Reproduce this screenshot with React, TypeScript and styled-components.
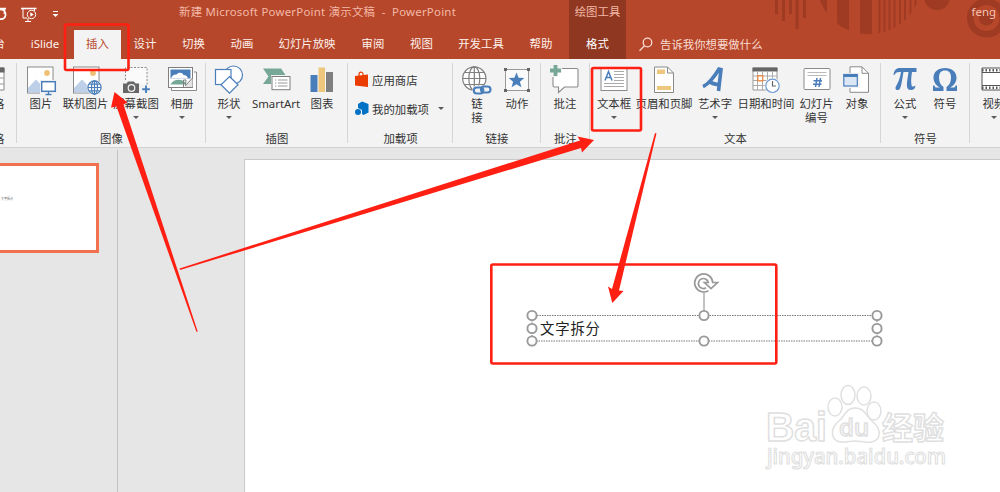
import React from 'react';
import styled, { createGlobalStyle } from 'styled-components';

const Global = createGlobalStyle`
  * { box-sizing: border-box; }
  body {
    margin: 0;
    overflow: hidden;
    font-family: "Noto Sans", "Noto Sans CJK SC", sans-serif;
    font-size: 11.4px;
    color: #333;
  }
`;

const Window = styled.div`
  position: relative;
  width: 1000px;
  height: 492px;
  overflow: hidden;
  display: flex;
  flex-direction: column;
  background: #e6e6e6;
`;

const Header = styled.header`
  position: relative;
  height: 59px;
  flex: none;
  background: #b7472a;
  color: #fbeae5;
`;

const Decor = styled.svg`
  position: absolute;
  right: 0;
  top: 0;
`;

const HeaderRows = styled.div`
  position: relative;
  height: 59px;
  display: flex;
  align-items: stretch;
`;

const HeaderMain = styled.div`
  width: 569px;
  flex: none;
  display: flex;
  flex-direction: column;
`;

const HeaderEnd = styled.div`
  flex: 1;
  display: flex;
  flex-direction: column;
`;

const TitleRow = styled.div`
  height: 30px;
  flex: none;
  display: flex;
  align-items: flex-start;
  color: #f3b9a8;
`;

const QuickAccess = styled.svg`
  flex: none;
`;

const Title = styled.span`
  margin-left: 109px;
  line-height: 16px;
  padding-top: 4px;
  white-space: pre;
  letter-spacing: 0.25px;
`;

const User = styled.span`
  margin: 4px 4px 0 auto;
  line-height: 16px;
  color: #f5c3b4;
`;

const TabRow = styled.nav`
  height: 29px;
  flex: none;
  display: flex;
`;

const Tab = styled.div<{ $w: number; $active?: boolean }>`
  width: ${p => p.$w}px;
  flex: none;
  display: flex;
  justify-content: center;
  line-height: 28px;
  white-space: nowrap;
  background: ${p => (p.$active ? '#f3f3f3' : 'transparent')};
  color: ${p => (p.$active ? '#b7472a' : '#fdf1ed')};
`;

const ContextTab = styled.div`
  width: 57px;
  flex: none;
  background: #8f3720;
  display: flex;
  flex-direction: column;
  align-items: center;
`;

const ContextTitle = styled.span`
  height: 30px;
  padding-top: 4px;
  line-height: 16px;
  color: #f3b9a8;
`;

const ContextName = styled.span`
  line-height: 28px;
  color: #fff;
`;

const TellMe = styled.div`
  height: 28px;
  display: flex;
  align-items: center;
  padding-left: 12px;
  gap: 7px;
  color: #f9dcd3;
`;

const Ribbon = styled.section`
  height: 89px;
  flex: none;
  display: flex;
  background: #f3f3f3;
  border-bottom: 1px solid #d2d2d2;
  overflow: hidden;
`;

const Group = styled.div<{ $w: number }>`
  position: relative;
  width: ${p => p.$w}px;
  flex: none;
  display: flex;
  flex-direction: column;
  &::after {
    content: '';
    position: absolute;
    right: 0;
    top: 4px;
    width: 1px;
    height: 80px;
    background: #d6d6d6;
  }
`;

const GroupBody = styled.div`
  height: 71px;
  flex: none;
  display: flex;
  padding-top: 6px;
`;

const GroupLabel = styled.div<{ $shift?: number }>`
  text-align: center;
  line-height: 17px;
  white-space: nowrap;
  margin-left: ${p => p.$shift ?? 0}px;
`;

const ToolButton = styled.div<{ $w: number; $gap?: number }>`
  width: ${p => p.$w}px;
  margin-left: ${p => p.$gap ?? 0}px;
  flex: none;
  display: flex;
  flex-direction: column;
  align-items: center;
`;

const ToolIcon = styled.svg`
  width: 30px;
  height: 30px;
  flex: none;
  overflow: visible;
`;

const ToolLabel = styled.span`
  margin-top: 2px;
  line-height: 14px;
  white-space: pre;
  text-align: center;
`;

const Caret = styled.i`
  margin-top: 5px;
  border: 3px solid transparent;
  border-top-color: #5a5a5a;
  border-bottom: 0;
`;

const AddinList = styled.div`
  display: flex;
  flex-direction: column;
  padding: 0 0 0 7px;
`;

const AddinRow = styled.div`
  height: 29px;
  display: flex;
  align-items: center;
  gap: 3px;
  white-space: nowrap;
`;

const AddinCaret = styled(Caret)`
  margin: 0 0 0 6px;
`;

const Workspace = styled.main`
  flex: 1;
  display: flex;
`;

const ThumbPane = styled.aside`
  width: 118px;
  flex: none;
  margin-top: 2px;
  padding-top: 13px;
  border-right: 1px solid #c3c3c3;
`;

const Thumb = styled.div`
  width: 99px;
  height: 90px;
  background: #fff;
  border: 3px solid #f2714f;
  border-left: 0;
  padding: 31px 0 0 1px;
  font-size: 3px;
  line-height: 5px;
  color: #555;
`;

const Canvas = styled.div`
  flex: 1;
  display: flex;
  padding: 11px 0 0 126px;
`;

const Slide = styled.div`
  position: relative;
  flex: 1;
  background: #fff;
  border: 1px solid #c9c9c9;
  border-width: 1px 0 0 1px;
`;

const TextBox = styled.div`
  position: absolute;
  left: 287px;
  top: 155px;
  width: 346px;
  height: 27px;
  padding-left: 8px;
  font-size: 14.4px;
  letter-spacing: 0.8px;
  line-height: 27px;
  color: #222;
`;

const Handles = styled.svg`
  position: absolute;
  left: -10px;
  top: -50px;
`;

const Watermark = styled.svg`
  position: absolute;
  left: 516px;
  top: 220px;
`;

const Annotations = styled.svg`
  position: absolute;
  left: 0;
  top: 0;
  pointer-events: none;
`;

const BLUE = '#4a7ebb';
const GREY = '#7f7f7f';

const Photo = () => (
  <>
    <rect x="1.500" y="2" width="25.500" height="26" fill="#fff" stroke="#8a8a8a" />
    <path d="M2 27.500V23l8-8.500 8 8.500v4.500z" fill="#bdd0e7" />
    <circle cx="21" cy="8" r="2.900" fill="#eec176" />
  </>
);

const icons: Record<string, React.ReactNode> = {
  picture: (
    <>
      <Photo />
      <path d="M14 15h17v15H14z" fill="#f3f3f3" />
      <rect x="15.700" y="16.700" width="13.600" height="9.600" fill="#fff" stroke={BLUE} strokeWidth="1.500" />
      <path d="M22.500 27v2M19.500 29.500h6" stroke={BLUE} strokeWidth="1.300" />
    </>
  ),
  online: (
    <g transform="translate(1 0)">
      <Photo />
      <circle cx="22.500" cy="22.500" r="7.800" fill="#f3f3f3" />
      <g fill="none" stroke={BLUE} strokeWidth="1.200">
        <circle cx="22.500" cy="22.500" r="6.600" fill="#fff" />
        <ellipse cx="22.500" cy="22.500" rx="3" ry="6.600" />
        <path d="M22.500 16v13M16 22.500h13M17.200 19.200h10.600M17.200 25.800h10.600" />
      </g>
    </g>
  ),
  screenshot: (
    <>
      <path d="M4.500 15V2.500h21.500V20" fill="#fafafa" stroke="#8a8a8a" strokeDasharray="2 1.500" />
      <path d="M2 18.500h3.500l1.500-2h6l1.500 2H18V28H2z" fill="#666" />
      <circle cx="10.500" cy="23" r="3.300" fill="none" stroke="#f3f3f3" strokeWidth="1.200" />
      <path d="M25 20.500v7.500M21.200 24.200h7.600" stroke={BLUE} strokeWidth="1.900" />
    </>
  ),
  album: (
    <>
      <path d="M4.500 23v2.500h25V7H27" fill="#fff" stroke="#8a8a8a" />
      <rect x="1.500" y="2.500" width="24" height="20" fill="#fff" stroke={GREY} />
      <path d="M3.500 4.500h20v9h-20z" fill={BLUE} />
      <path d="M4 13.500c1-3 3-4.500 5.500-4 2-2.500 6-2 7 .5 2.500 0 4 1.500 4.500 3.500z" fill="#fff" />
      <path d="M3.500 19.500c2-4 7-6 12-4l3 2v2z" fill="#76a797" />
      <path d="M17 22l8.500-9v9z" fill="#e3e3e3" />
      <path d="M16.500 22.500V15H19l-.5 5.500L25.500 13" fill="none" stroke={GREY} />
    </>
  ),
  shapes: (
    <g fill="#fff" stroke={BLUE} strokeWidth="1.200">
      <circle cx="19.500" cy="10" r="9" />
      <rect x="1.500" y="4.500" width="15.500" height="15" />
      <path d="M15.500 11.500l8.500 8.300-8.500 8.300L7 19.800z" />
    </g>
  ),
  smartart: (
    <>
      <path d="M2 3.500h18l4.500 6.500v9H2l5.500-7.500z" fill="#76a797" />
      <path d="M10 10h21v16H10z" fill="#f3f3f3" />
      <rect x="11" y="11.500" width="18" height="13.200" fill="#fff" stroke={GREY} />
      <path d="M14 15h1.300M14 18h1.300M14 21h1.300M17 15h9.500M17 18h9.500M17 21h9.500" stroke="#999" />
    </>
  ),
  chart: (
    <>
      <path d="M3.500 10h7v17h-7z" fill={BLUE} />
      <path d="M11.500 2.500H18V27h-6.500z" fill="#eec67c" />
      <path d="M19 7h7v20h-7z" fill={GREY} />
    </>
  ),
  link: (
    <>
      <g fill="none" stroke={GREY} strokeWidth="1.200">
        <circle cx="12.300" cy="13.500" r="11.600" fill="#fff" />
        <ellipse cx="12.300" cy="13.500" rx="5.500" ry="11.600" />
        <path d="M12.300 2v23M.7 13.500h23M2.500 7.500h19.600M2.500 19.500h19.600" />
      </g>
      <rect x="10.500" y="20.500" width="19" height="9.500" rx="4.500" fill="#f3f3f3" />
      <g fill="none" stroke={BLUE} strokeWidth="2.100">
        <rect x="11.800" y="22.500" width="9.500" height="6" rx="3" />
        <rect x="19" y="21.500" width="9.500" height="6" rx="3" />
      </g>
    </>
  ),
  action: (
    <>
      <rect x="3.500" y="4.500" width="23" height="21" fill="#fafafa" stroke="#999" />
      <path d="M2 3h3v3H2zM25 3h3v3h-3zM2 24h3v3H2zM25 24h3v3h-3z" fill="#666" />
      <path d="M14.500 7.500l2.100 5.300 5.700.3-4.400 3.600 1.500 5.600-4.900-3.100-4.900 3.100 1.500-5.600-4.400-3.600 5.700-.3z" fill={BLUE} />
    </>
  ),
  comment: (
    <>
      <path d="M4.500 3.500h22a1.500 1.500 0 0 1 1.500 1.500v15.500a1.500 1.500 0 0 1-1.500 1.500H14.500L8.500 27.500V22h-4A1.500 1.500 0 0 1 3 20.500V5a1.500 1.500 0 0 1 1.500-1.500z" fill="#fff" stroke="#8a8a8a" strokeWidth="1.100" />
      <path d="M-1 -1h13v8.500H7.500V12H-1z" fill="#f3f3f3" />
      <path d="M5.500 0v11M0 5.500h11" stroke="#76a797" strokeWidth="3.800" />
    </>
  ),
  textbox: (
    <>
      <rect x="2" y="3" width="26" height="22.500" fill="#fff" stroke="#8a8a8a" />
      <path d="M15 6.500h10M15 9.500h10M15 12.500h10M15 15.500h10M5 18.500h20M5 21.500h20" stroke="#aaa" />
      <path d="M6 15.500L9.500 6.500L13 15.500M7.300 12.500h4.400" fill="none" stroke={BLUE} strokeWidth="1.500" />
    </>
  ),
  headerfooter: (
    <>
      <path d="M5.500 2h13l6 6v19.500h-19z" fill="#fff" stroke="#8a8a8a" />
      <path d="M18.500 2v6h6" fill="none" stroke="#8a8a8a" />
      <path d="M8 4.500h8v4.500H8zM8 21h14v4H8z" fill="#eec67c" />
    </>
  ),
  wordart: (
    <path d="M3 21.500C8 19.500 15 11 19 4l2 .5-2.500 21.500M8.500 16c3 2.500 7 3.500 11.500 3.500" fill="none" stroke={BLUE} strokeWidth="3.600" />
  ),
  datetime: (
    <>
      <path d="M2 3h24v22H2z" fill="#fff" stroke="#999" />
      <path d="M1.500 2.500h25v4h-25z" fill="#666" />
      <path d="M6.500 7v18M11.500 7v18M16.500 7v18M21.500 7v18M2 11h24M2 15.500h24M2 20.500h24" stroke="#aaa" />
      <rect x="6.800" y="10.800" width="5" height="5" fill="#fff" stroke="#ed7d31" strokeWidth="1.200" />
      <circle cx="21.500" cy="20.800" r="8" fill="#f3f3f3" />
      <circle cx="21.500" cy="20.800" r="6.700" fill="#fff" stroke="#6d9bd1" strokeWidth="1.200" />
      <path d="M21.500 16v5h3.500" fill="none" stroke="#666" strokeWidth="1.200" />
    </>
  ),
  slidenumber: (
    <>
      <rect x="2" y="3.500" width="26" height="21" rx="1" fill="#fff" stroke="#8a8a8a" />
      <path d="M5.500 7.500h19M5.500 10.500h19" stroke="#bbb" />
      <path d="M13.500 22l1.500-9M17 22l1.500-9M11.500 15.700h8.500M11 19.300h8.500" stroke={BLUE} strokeWidth="1.500" />
    </>
  ),
  object: (
    <>
      <path d="M8 1.800h12l6.500 6.500v19H8z" fill="#fff" stroke="#8a8a8a" />
      <path d="M20 1.800v6.500h6.500" fill="none" stroke="#8a8a8a" />
      <path d="M1 8h16.500v15H1z" fill="#f3f3f3" />
      <rect x="1.800" y="9.500" width="13.500" height="11.500" fill="#dbe7f5" stroke={BLUE} strokeWidth="1.200" />
      <path d="M1.500 9h14v3h-14z" fill={BLUE} />
    </>
  ),
  equation: (
    <path d="M3.500 10C4 5.500 6 3 10 3h16.500v4H22c-1 6-1 10-.5 13 .3 2 2 2 4 .5-.3 3-2 4.500-4.500 4.500-6 0-4-7-2.500-18h-5C12 16 11 22 10 23.500c-1.500 2.500-5 2-4.500-1C6 20.500 9.500 17 11 7 7 6.500 5.500 7.500 4.500 10z" fill={BLUE} />
  ),
  symbol: (
    <path d="M3 20.500h1.500c.3 1.500.8 2 2 2H10C6 20.500 3.500 17 3.500 12.500 3.500 7 8 3 15 3s11.500 4 11.500 9.500c0 4.500-2.500 8-6.500 10h3.500c1.200 0 1.700-.5 2-2H27v5.500H16.500v-4C19.500 20 21 17 21 12.500 21 8 19 5.500 15 5.500S9 8 9 12.500c0 4.500 1.500 7.500 4.500 9.500v4H3z" fill={BLUE} />
  ),
  video: (
    <>
      <path d="M3 3h36v22H3z" fill="#fff" stroke="#555" />
      <path d="M3 5.200h36M3 22.800h36" stroke="#555" strokeWidth="2.500" strokeDasharray="1.500 2" />
      <path d="M3 7.500h36M3 20.500h36" stroke="#555" />
    </>
  ),
  table: (
    <g transform="translate(6 0)">
      <path d="M0 3h20v22H0z" fill="#fff" stroke="#888" />
      <path d="M0 2.500h20.500v5H0z" fill="#666" />
      <path d="M0 13h20M0 19h20M14.500 7v18" stroke="#999" />
    </g>
  ),
};

type ToolProps = { icon: string; label: string; w: number; gap?: number; menu?: boolean };

const Tool = ({ icon, label, w, gap, menu }: ToolProps) => (
  <ToolButton $w={w} $gap={gap}>
    <ToolIcon viewBox="0 0 30 30">{icons[icon]}</ToolIcon>
    <ToolLabel>{label}</ToolLabel>
    {menu && <Caret />}
  </ToolButton>
);

const tabs: [string, number, boolean?][] = [
  ['iSlide', 58],
  ['插入', 47, true],
  ['设计', 48],
  ['切换', 49],
  ['动画', 48],
  ['幻灯片放映', 82],
  ['审阅', 50],
  ['视图', 47],
  ['开发工具', 72],
  ['帮助', 48],
];

const FirstTab = styled(Tab)`
  justify-content: flex-start;
  text-indent: -6.5px;
`;

type GroupData = { label: string; w: number; tools: ToolProps[] };

const groups: GroupData[] = [
  {
    label: '图像', w: 189,
    tools: [
      { icon: 'picture', label: '图片', w: 42, gap: 3 },
      { icon: 'online', label: '联机图片', w: 47 },
      { icon: 'screenshot', label: '屏幕截图', w: 52, gap: 1, menu: true },
      { icon: 'album', label: '相册', w: 40, menu: true },
    ],
  },
  {
    label: '插图', w: 142,
    tools: [
      { icon: 'shapes', label: '形状', w: 42, gap: 2, menu: true },
      { icon: 'smartart', label: 'SmartArt', w: 52 },
      { icon: 'chart', label: '图表', w: 40 },
    ],
  },
];

const groupsAfter: GroupData[] = [
  {
    label: '链接', w: 88,
    tools: [
      { icon: 'link', label: '链\n接', w: 40, gap: 4 },
      { icon: 'action', label: '动作', w: 40 },
    ],
  },
  { label: '批注', w: 49, tools: [{ icon: 'comment', label: '批注', w: 40, gap: 4 }] },
  {
    label: '文本', w: 291,
    tools: [
      { icon: 'textbox', label: '文本框', w: 42, gap: 3, menu: true },
      { icon: 'headerfooter', label: '页眉和页脚', w: 58 },
      { icon: 'wordart', label: '艺术字', w: 44, menu: true },
      { icon: 'datetime', label: '日期和时间', w: 58 },
      { icon: 'slidenumber', label: '幻灯片\n编号', w: 43 },
      { icon: 'object', label: '对象', w: 38 },
    ],
  },
  {
    label: '符号', w: 89,
    tools: [
      { icon: 'equation', label: '公式', w: 40, gap: 4, menu: true },
      { icon: 'symbol', label: '符号', w: 40 },
    ],
  },
];

const RibbonGroup = ({ label, w, tools }: GroupData) => (
  <Group $w={w}>
    <GroupBody>{tools.map(t => <Tool key={t.label} {...t} />)}</GroupBody>
    <GroupLabel>{label}</GroupLabel>
  </Group>
);

const handlePoints = [
  [10, 50.5], [182, 50.5], [355, 50.5],
  [10, 63.5], [355, 63.5],
  [10, 76], [182, 76], [355, 76],
];

export default function App() {
  return (
    <Window>
      <Global />
      <Header>
        <Decor width="235" height="59" viewBox="765 0 235 59" fill="#9e3b22">
          <path d="M775 0h3v14h-3zM782 0h3v21h-3zM789 0h3v14h-3zM795.500 0h3v29h-3zM803 0h3v18h-3z" />
          <clipPath id="disc"><circle cx="869" cy="-18" r="52.300" /></clipPath>
          <path clipPath="url(#disc)" d="M817 0h10v40h-10zM837 0h12v40h-12zM860 0h12v40h-12zM878.500 0h2v40h-2zM883.500 0h2v40h-2zM888.500 0h2v40h-2zM893.500 0h2v40h-2zM899 0h2v40h-2zM904 0h2v40h-2zM909.500 0h2v40h-2zM914.500 0h2v40h-2z" />
          <circle cx="937" cy="-3" r="13" />
          <circle cx="986.500" cy="18" r="16.300" fill="none" stroke="#9e3b22" strokeWidth="6.500" />
          <circle cx="986.500" cy="18" r="7.500" />
        </Decor>
        <HeaderRows>
          <HeaderMain>
            <TitleRow>
              <QuickAccess width="70" height="30" fill="none" stroke="#fff">
                <path d="M0 8.500h6M4.500 9v5M-1 19c5 1 7-2 6.500-5.500C5 10.500 3 9.500 0 9.500" strokeWidth="1.700" />
                <path d="M21 8.500h15.500" strokeWidth="1.600" />
                <path d="M23 9v9h4M34.500 9v2M25 21.500h6M28 18v3" />
                <circle cx="31.500" cy="14.500" r="4.200" />
                <path d="M30.300 12.300v4.400l3.500-2.200z" fill="#fff" stroke="none" />
                <path d="M53 11.500h5" />
                <path d="M52.500 14h6l-3 3z" fill="#fff" stroke="none" />
              </QuickAccess>
              <Title>新建 Microsoft PowerPoint 演示文稿  -  PowerPoint</Title>
            </TitleRow>
            <TabRow>
              <FirstTab $w={16}>台</FirstTab>
              {tabs.map(([name, w, active]) => (
                <Tab key={name} $w={w} $active={active}>{name}</Tab>
              ))}
            </TabRow>
          </HeaderMain>
          <ContextTab>
            <ContextTitle>绘图工具</ContextTitle>
            <ContextName>格式</ContextName>
          </ContextTab>
          <HeaderEnd>
            <TitleRow><User>feng</User></TitleRow>
            <TellMe>
              <svg width="15" height="15" fill="none" stroke="#f9dcd3" strokeWidth="1.300">
                <circle cx="9.500" cy="5.500" r="4.300" />
                <path d="M6.500 8.700L1.500 13.700" />
              </svg>
              告诉我你想要做什么
            </TellMe>
          </HeaderEnd>
        </HeaderRows>
      </Header>

      <Ribbon>
        <Group $w={17}>
          <GroupBody><Tool icon="table" label="表格" w={30} gap={-22} /></GroupBody>
          <GroupLabel $shift={-31}>表格</GroupLabel>
        </Group>
        {groups.map(g => <RibbonGroup key={g.label} {...g} />)}
        <Group $w={105}>
          <GroupBody>
            <AddinList>
              <AddinRow>
                <svg width="14" height="17">
                  <path d="M0 5l13-1.500V16L0 14.500z" fill="#eb3c00" />
                  <path d="M4 6V3.500C4 .5 8 .5 8 3v2" fill="none" stroke="#eb3c00" strokeWidth="1.200" />
                </svg>
                应用商店
              </AddinRow>
              <AddinRow>
                <svg width="14" height="15" fill="#0072c6">
                  <path d="M3 3l4-2.500L13.500 3v8.500L8.500 14 7 13V9L3 7z" />
                  <circle cx="3" cy="11" r="3" />
                </svg>
                我的加载项
                <AddinCaret />
              </AddinRow>
            </AddinList>
          </GroupBody>
          <GroupLabel>加载项</GroupLabel>
        </Group>
        {groupsAfter.map(g => <RibbonGroup key={g.label} {...g} />)}
        <Group $w={60}>
          <GroupBody><Tool icon="video" label="视频" w={48} menu /></GroupBody>
        </Group>
      </Ribbon>

      <Workspace>
        <ThumbPane><Thumb>文字拆分</Thumb></ThumbPane>
        <Canvas>
          <Slide>
            <TextBox>
              文字拆分
              <Handles width="370" height="90" fill="none" stroke="#999">
                <path d="M182 28v20" strokeWidth="1.200" />
                <path d="M10 50.500h345V76H10z" stroke="#777" strokeDasharray="1.500 1" />
                {handlePoints.map(([x, y]) => (
                  <circle key={`${x}-${y}`} cx={x} cy={y} r="4.600" fill="#fff" strokeWidth="1.900" />
                ))}
                <path d="M186.500 25.600A9 9 0 1 1 190.700 17.500H195.500L189 23.500L182.500 17.500H186.300A5 5 0 1 0 184 22.800" fill="#fff" strokeWidth="1.700" />
              </Handles>
            </TextBox>
            <Watermark width="190" height="100" fill="#fff" stroke="#e0e0e0" strokeWidth="1.500" strokeLinejoin="round">
              <text x="5" y="61" fontSize="40" fontFamily="Liberation Sans, sans-serif" fontWeight="bold" textLength="61" lengthAdjust="spacingAndGlyphs">Bai</text>
              <ellipse cx="74" cy="27" rx="7" ry="9" />
              <ellipse cx="87" cy="15" rx="7" ry="9.500" />
              <ellipse cx="103" cy="16" rx="7" ry="9" />
              <ellipse cx="113" cy="31" rx="7" ry="9" />
              <path d="M94 28c-9 0-10 8-16 13-10 8-8 20 2 21 6 .5 9-1 14-1s10 2 16 1c10-1 11-13 2-20-7-6-8-14-18-14z" />
              <text x="78" y="56" fontSize="24" fontFamily="Noto Sans, sans-serif" fontWeight="500" textLength="30" lengthAdjust="spacingAndGlyphs">du</text>
              <text x="121" y="59" fontSize="31" fontWeight="bold" fontFamily="Noto Sans CJK SC, sans-serif" textLength="62" lengthAdjust="spacingAndGlyphs">经验</text>
              <text x="6" y="84" fontSize="21" fontFamily="Noto Sans, sans-serif" fontWeight="500" textLength="179" lengthAdjust="spacingAndGlyphs" strokeWidth="1.100">jingyan.baidu.com</text>
            </Watermark>
          </Slide>
        </Canvas>
      </Workspace>

      <Annotations width="1000" height="492" fill="#ff2013">
        <g fill="none" stroke="#ff2013" strokeWidth="2.600">
          <rect x="65" y="24.500" width="63.500" height="45.500" rx="1.500" />
          <rect x="592" y="68" width="49" height="62.500" rx="1.500" />
          <rect x="491.300" y="264.500" width="285" height="99" rx="1.500" />
        </g>
        <path d="M114.500 92L127.500 102.500 123.500 104.500 197.700 331.500 196.500 332 116.500 106.500 111 107.500z" />
        <path d="M179.500 268.500L580 140.500 577.500 136.500 594 140 582 152.500 581 148 180 270z" />
        <path d="M655 133L656.500 133.500 619 290.500 623.500 291 612.300 303 608 286.500 612 289z" />
      </Annotations>
    </Window>
  );
}
